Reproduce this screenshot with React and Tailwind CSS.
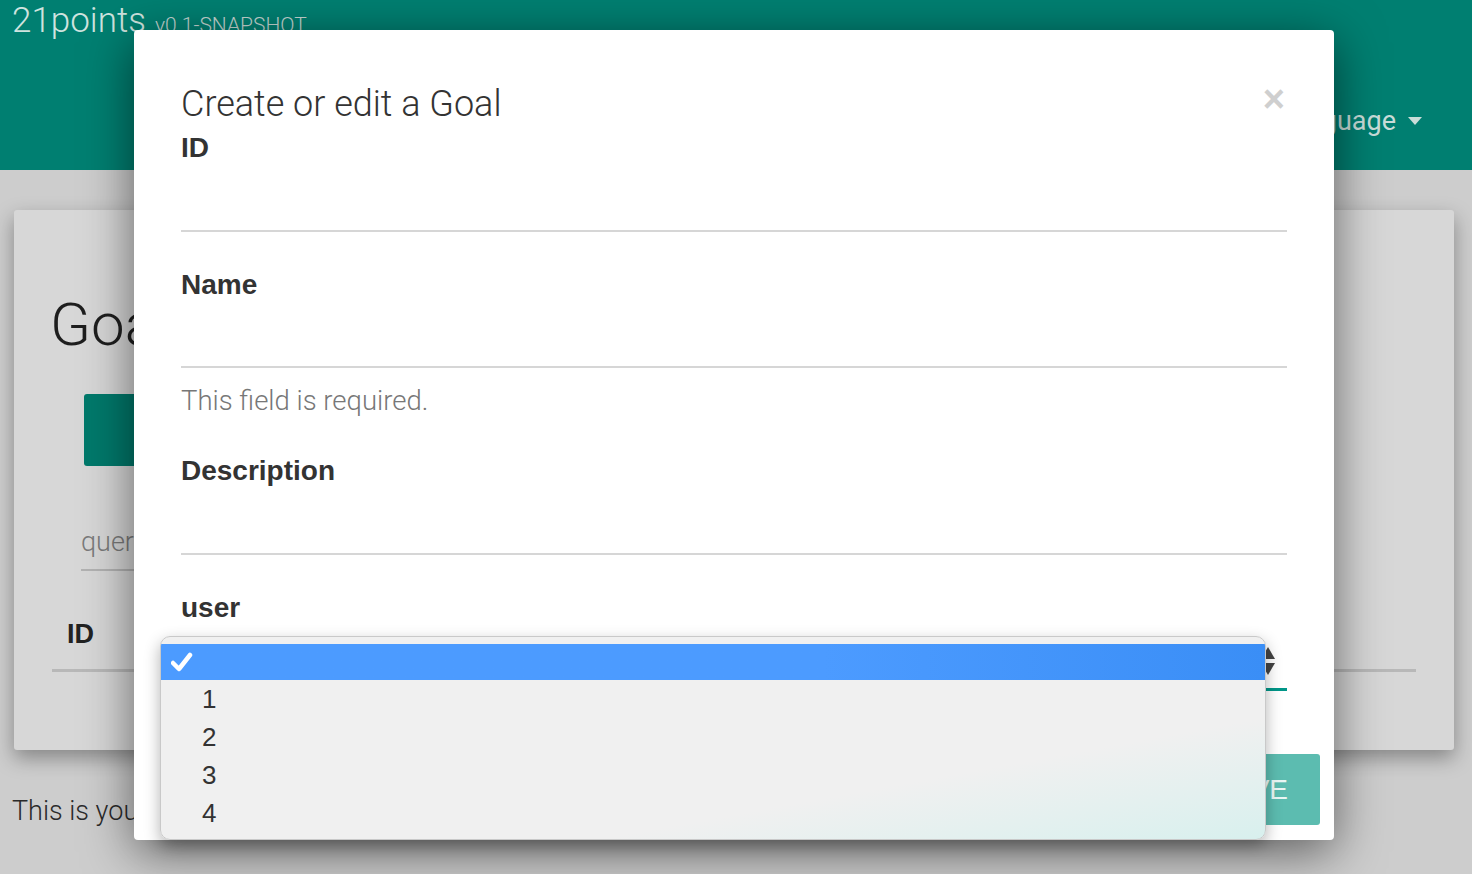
import React from "react";

export default function App() {
  return (
    <div className="relative w-[1472px] h-[874px] overflow-hidden bg-[#cdcdcd] font-['Liberation_Sans',Arial,sans-serif] text-[#333]">
      {/* header */}
      <header className="h-[170px] bg-[#007f71] flex justify-between">
        <div className="pl-[12px] flex items-baseline gap-[9px] h-[40px] mt-[1px]">
          <span className="font-['Roboto',sans-serif] font-light text-[35px] leading-[40px] text-[#cfe3df]">21points</span>
          <span className="font-['Roboto',sans-serif] font-light text-[21px] text-[#c4d6d2]">v0.1-SNAPSHOT</span>
        </div>
        <div className="pr-[50px] pt-[121px] flex items-center gap-[12px] h-[40px]">
          <span className="font-['Roboto',sans-serif] text-[27px] text-[#c9ddd9]">Language</span>
          <svg width="14" height="8" viewBox="0 0 14 8"><path d="M0 0 L14 0 L7 8 Z" fill="#c9ddd9" /></svg>
        </div>
      </header>

      {/* page card */}
      <div className="px-[14px] pt-[40px]">
        <div className="w-[1440px] h-[540px] bg-[#d7d7d7] rounded-[3px] shadow-[0_8px_20px_rgba(0,0,0,0.35)] pt-[80px] pl-[38px] pr-[38px]">
          <h1 className="-ml-[2px] font-['Roboto',sans-serif] font-light text-[60px] leading-[70px] text-[#1e1e1e]">Goals</h1>
          <div className="mt-[34px] ml-[32px] w-[200px] h-[72px] bg-[#00796b] rounded-[3px]" />
          <div className="mt-[56px] ml-[29px] w-[300px] border-b-2 border-[#b2b2b2] pb-[6px]">
            <span className="font-['Roboto',sans-serif] font-light text-[27px] text-[#7a7a7a]">query</span>
          </div>
          <div className="mt-[43px] border-b-[3px] border-[#b8b8b8] pb-[15px] pl-[15px]">
            <span className="font-bold text-[27px] text-[#222]">ID</span>
          </div>
        </div>
        <p className="mt-[41px] -ml-[2px] font-['Roboto',sans-serif] font-light text-[27px] text-[#2a2a2a]">This is your</p>
      </div>

      {/* modal */}
      <div className="absolute left-[134px] top-[30px] w-[1200px] h-[810px] bg-white rounded-[4px] shadow-[0_12px_50px_rgba(0,0,0,0.55)] px-[47px] pt-[52px]">
        <div className="flex justify-between items-start">
          <h2 className="font-['Roboto',sans-serif] font-light text-[36px] leading-[44px] text-[#333]">Create or edit a Goal</h2>
          <span className="text-[38px] leading-[34px] font-bold text-[#cfcfcf] mr-[2px]">×</span>
        </div>
        <div className="font-bold text-[28px] leading-[34px] mt-[5px]">ID</div>
        <div className="h-[67px] border-b-2 border-[#d6d6d6]" />
        <div className="font-bold text-[28px] leading-[34px] mt-[36px]">Name</div>
        <div className="h-[66px] border-b-2 border-[#d6d6d6]" />
        <div className="font-['Roboto',sans-serif] font-light text-[27.5px] leading-[34px] text-[#777] mt-[16px]">This field is required.</div>
        <div className="font-bold text-[28px] leading-[34px] mt-[36px]">Description</div>
        <div className="h-[67px] border-b-2 border-[#d6d6d6]" />
        <div className="font-bold text-[28px] leading-[34px] mt-[36px]">user</div>
        <div className="relative h-[66px] border-b-[3px] border-[#009688] flex justify-end items-center">
          <svg width="14" height="28" viewBox="0 0 14 28" className="mr-[12px] mt-[8px]">
            <path d="M7 0 L14 12 L0 12 Z" fill="#444" />
            <path d="M7 28 L14 16 L0 16 Z" fill="#444" />
          </svg>
        </div>
        <div className="flex justify-end mt-[63px] -mr-[33px]">
          <div className="h-[71px] px-[32px] bg-[#5cbcb0] rounded-[3px] flex items-center justify-center text-[#eaf7f5] text-[28px]">SAVE</div>
        </div>
      </div>

      {/* native select dropdown */}
      <div className="absolute left-[160px] top-[636px] w-[1106px] h-[204px] rounded-[10px] border border-[#c9c9c9] bg-gradient-to-br from-[#f0f0f0] from-70% to-[#d8f0ee] shadow-[0_6px_16px_rgba(0,0,0,0.3)] pt-[7px] overflow-hidden">
        <div className="h-[36px] bg-gradient-to-r from-[#4c9bff] from-60% to-[#3a8ef6] flex items-center pl-[10px]">
          <svg width="22" height="20" viewBox="0 0 22 20">
            <path d="M2 11 L8 17 L19 3" stroke="white" strokeWidth="4.5" fill="none" strokeLinecap="round" strokeLinejoin="round" />
          </svg>
        </div>
        {["1", "2", "3", "4"].map((n) => (
          <div key={n} className="h-[38px] leading-[38px] pl-[41px] text-[26px] text-[#333]">{n}</div>
        ))}
      </div>
    </div>
  );
}
